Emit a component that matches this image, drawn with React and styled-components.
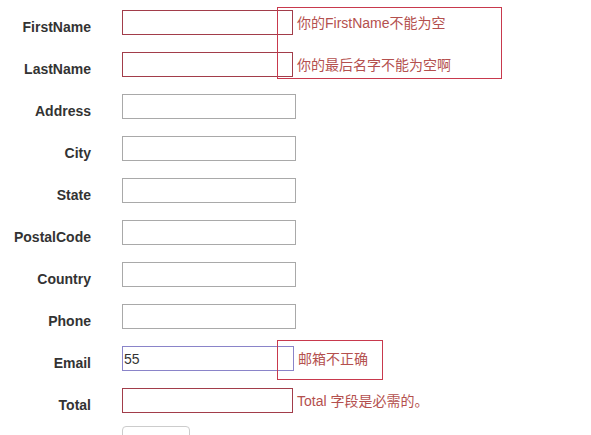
import React from 'react';
import styled, { createGlobalStyle } from 'styled-components';

const GlobalStyle = createGlobalStyle`
  html, body {
    margin: 0;
    padding: 0;
    background: #fff;
  }
  body {
    font-family: "Liberation Sans", Arial, "Noto Sans CJK SC", sans-serif;
    font-size: 14px;
    color: #333;
  }
`;

const Form = styled.form`
  position: relative;
  padding-top: 10px;
  width: 591px;
  height: 435px;
  box-sizing: border-box;
  overflow: hidden;
`;

const Row = styled.div`
  display: flex;
  align-items: flex-start;
  height: 42px;
`;

const Label = styled.label`
  width: 91px;
  margin-right: 31px;
  padding-top: 7px;
  line-height: 20px;
  text-align: right;
  font-weight: bold;
  font-size: 14px;
  color: #333;
`;

const Input = styled.input`
  box-sizing: border-box;
  width: ${(p) => (p.$invalid ? '171px' : p.$focus ? '172px' : '174px')};
  height: 25px;
  margin: 0;
  padding: 0 0 0 1px;
  font-family: inherit;
  font-size: 14px;
  color: #333;
  background: #fff;
  border: 1px solid
    ${(p) => (p.$invalid ? '#a23d4a' : p.$focus ? '#8a84c9' : '#a9a9a9')};
  outline: none;
`;

const Message = styled.span`
  margin-left: 4px;
  padding-top: 3px;
  line-height: 20px;
  font-size: 14px;
  color: #b4504e;
  white-space: nowrap;
`;

const Tip = styled.div`
  position: absolute;
  left: ${(p) => p.$left}px;
  top: ${(p) => p.$top}px;
  width: ${(p) => p.$width}px;
  height: ${(p) => p.$height}px;
  box-sizing: border-box;
  border: 1px solid #c8394d;
  pointer-events: none;
`;

const ButtonRow = styled.div`
  margin-top: -4px;
  padding-left: 122px;
`;

const Button = styled.button`
  width: 68px;
  height: 34px;
  border: 1px solid #ccc;
  border-radius: 4px;
  background: #fff;
  font-family: inherit;
  font-size: 14px;
  color: #333;
`;

const fields = [
  { name: 'FirstName', invalid: true, msg: '你的FirstName不能为空' },
  { name: 'LastName', invalid: true, msg: '你的最后名字不能为空啊' },
  { name: 'Address' },
  { name: 'City' },
  { name: 'State' },
  { name: 'PostalCode' },
  { name: 'Country' },
  { name: 'Phone' },
  { name: 'Email', focus: true, value: '55', msg: '邮箱不正确' },
  { name: 'Total', invalid: true, msg: 'Total 字段是必需的。' },
];

export default function App() {
  return (
    <>
      <GlobalStyle />
      <Form onSubmit={(e) => e.preventDefault()}>
        {fields.map((f) => (
          <Row key={f.name}>
            <Label htmlFor={f.name}>{f.name}</Label>
            <Input
              id={f.name}
              $invalid={f.invalid}
              $focus={f.focus}
              defaultValue={f.value || ''}
            />
            {f.msg && <Message>{f.msg}</Message>}
          </Row>
        ))}
        <ButtonRow>
          <Button type="submit">Submit</Button>
        </ButtonRow>
        <Tip $left={277} $top={7} $width={225} $height={72} />
        <Tip $left={277} $top={340} $width={106} $height={40} />
      </Form>
    </>
  );
}
